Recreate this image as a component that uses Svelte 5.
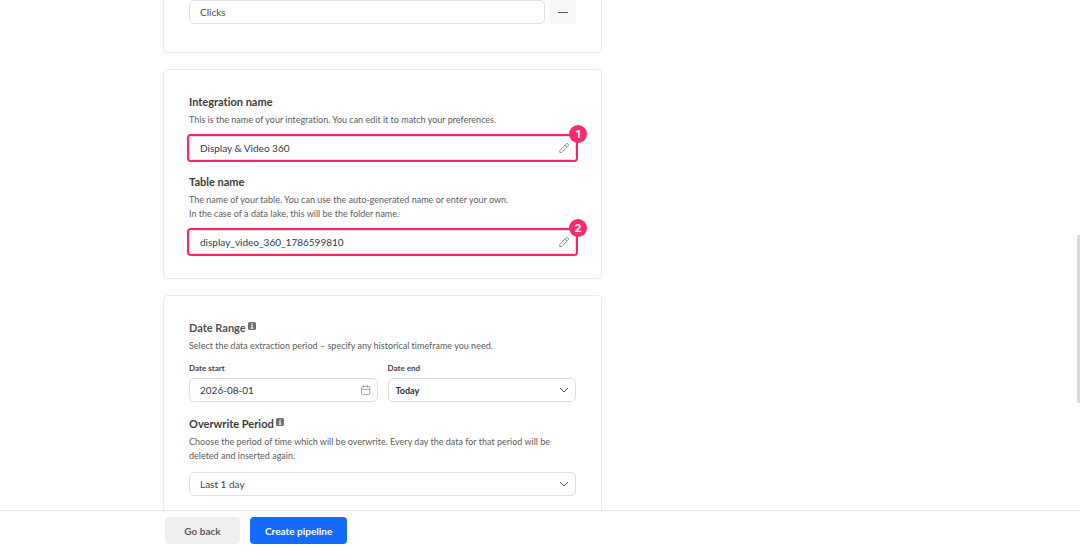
<script>
  let metric = $state("Clicks");
  let integrationName = $state("Display & Video 360");
  let tableName = $state("display_video_360_1786599810");
  let dateStart = $state("2026-08-01");
  let dateEnd = $state("Today");
  let overwrite = $state("Last 1 day");
</script>

{#snippet pencil()}
  <svg class="icon" viewBox="0 0 12 12" aria-hidden="true">
    <path d="M2.2 7.8 8 2a1.4 1.4 0 0 1 2.1 2.1L4.3 9.9c-.6.6-1.5.8-2.5.7-.2-1-.2-2.2.4-2.8zM7.1 3l2 2" />
  </svg>
{/snippet}

{#snippet chevron()}
  <svg class="icon chevron" viewBox="0 0 12 12" aria-hidden="true">
    <path d="m2 4 4 4 4-4" />
  </svg>
{/snippet}

{#snippet info()}
  <svg class="info" viewBox="0 0 8 8" aria-hidden="true">
    <rect width="8" height="8" rx="1.5" fill="#707070" />
    <path d="M3.5 1.2h1.2v1.2H3.5zM3 3.2h1.7v2.6h.7v.9H2.8v-.9h.7V4.1H3z" />
  </svg>
{/snippet}

<div class="page">
  <main class="content">
    <section class="card card-first">
      <div class="metric-row">
        <input type="text" aria-label="Metric" bind:value={metric} />
        <button type="button" class="remove" aria-label="Remove metric"></button>
      </div>
    </section>

    <section class="card">
      <div class="group">
        <label class="title" for="integration-name">Integration name</label>
        <p>This is the name of your integration. You can edit it to match your preferences.</p>
        <div class="field marked">
          <input id="integration-name" class="dark" type="text" bind:value={integrationName} />
          {@render pencil()}
          <span class="badge">1</span>
        </div>
      </div>

      <div class="group">
        <label class="title" for="table-name">Table name</label>
        <p>
          The name of your table. You can use the auto-generated name or enter your own.<br />
          In the case of a data lake, this will be the folder name.
        </p>
        <div class="field marked">
          <input id="table-name" class="dark" type="text" bind:value={tableName} />
          {@render pencil()}
          <span class="badge">2</span>
        </div>
      </div>
    </section>

    <section class="card">
      <div class="group">
        <h2 class="title soft">Date Range {@render info()}</h2>
        <p>Select the data extraction period – specify any historical timeframe you need.</p>
        <div class="dates">
          <div class="date">
            <label for="date-start">Date start</label>
            <div class="field">
              <input id="date-start" class="dark" type="text" bind:value={dateStart} />
              <svg class="icon calendar" viewBox="0 0 12 12" aria-hidden="true">
                <rect x="1.5" y="2.4" width="8.2" height="8.2" rx="1" />
                <path d="M1.5 5.4h8.2M3.6 1v2.6M7.6 1v2.6" />
              </svg>
            </div>
          </div>
          <div class="date">
            <label for="date-end">Date end</label>
            <div class="field">
              <select id="date-end" class="compact" bind:value={dateEnd}>
                <option>Today</option>
              </select>
              {@render chevron()}
            </div>
          </div>
        </div>
      </div>

      <div class="group">
        <label class="title" for="overwrite">Overwrite Period {@render info()}</label>
        <p>
          Choose the period of time which will be overwrite. Every day the data for that period will be
          deleted and inserted again.
        </p>
        <div class="field">
          <select id="overwrite" bind:value={overwrite}>
            <option>Last 1 day</option>
          </select>
          {@render chevron()}
        </div>
      </div>
    </section>

    <div class="scroll-thumb"></div>
  </main>

  <footer>
    <button type="button" class="back">Go back</button>
    <button type="button" class="create">Create pipeline</button>
  </footer>
</div>

<style>
  :global(body) {
    background: #fff;
    color: #444;
    font-family: Lato, sans-serif;
    font-variant-ligatures: none;
  }

  .page {
    display: flex;
    flex-direction: column;
    height: 100vh;
  }

  .content {
    position: relative;
    flex: 1;
    min-height: 0;
    overflow: hidden;
    padding: 0 24px 0 163px;
  }

  .card {
    box-sizing: border-box;
    max-width: 439px;
    margin-bottom: 16px;
    padding: 24px 25px;
    border: 1px solid #ebebeb;
    border-radius: 4px;
  }

  .card-first {
    padding-top: 0;
    padding-bottom: 28px;
    border-top: 0;
    border-radius: 0 0 4px 4px;
  }

  .metric-row {
    display: flex;
    gap: 5px;
  }

  .remove {
    display: flex;
    flex: 0 0 26px;
    align-items: center;
    justify-content: center;
    padding: 0;
    border: 0;
    border-radius: 4px;
    background: #f6f6f6;
  }

  .remove::before {
    content: "";
    width: 10px;
    height: 1px;
    background: #555;
  }

  .group + .group {
    margin-top: 14px;
  }

  .title {
    display: block;
    margin: 0 0 3px;
    color: #3c3c3c;
    font-size: 11px;
    font-weight: 700;
    line-height: 16px;
  }

  .soft {
    color: #505050;
  }

  p {
    margin: 0 0 9px;
    color: #5c5c5c;
    font-size: 9px;
    line-height: 14px;
  }

  .info {
    width: 8px;
    height: 8px;
    vertical-align: 2px;
  }

  .info path {
    fill: #fff;
  }

  .field {
    position: relative;
  }

  input,
  select {
    box-sizing: border-box;
    display: block;
    width: 100%;
    height: 24px;
    padding: 0 24px 0 10px;
    border: 1px solid #dedede;
    border-radius: 5px;
    outline: 0;
    background: #fff;
    color: #505050;
    font-family: inherit;
    font-size: 10px;
    appearance: none;
  }

  select {
    color: #444;
  }

  .dark {
    color: #2e3a50;
  }

  .compact {
    padding-left: 7px;
    color: #2a3140;
    font-size: 9px;
    font-weight: 700;
  }

  .icon {
    position: absolute;
    top: 6px;
    right: 6px;
    width: 12px;
    height: 12px;
    fill: none;
    stroke: #7a7a82;
    stroke-width: 0.8;
    pointer-events: none;
  }

  .chevron {
    stroke: #444c5c;
    stroke-width: 1;
  }

  .calendar {
    stroke: #909090;
  }

  .marked::after {
    content: "";
    position: absolute;
    inset: -2px;
    border: 2px solid #f72765;
    border-radius: 4px;
    pointer-events: none;
  }

  .badge {
    position: absolute;
    z-index: 1;
    top: -11px;
    right: -11px;
    width: 18px;
    border-radius: 50%;
    background: #fb2b69;
    color: #fff;
    font-family: Inter, sans-serif;
    font-size: 11px;
    font-weight: 700;
    line-height: 18px;
    text-align: center;
  }

  .dates {
    display: grid;
    grid-template-columns: 1fr 1fr;
    gap: 10px;
  }

  .date label {
    display: block;
    margin-bottom: 3px;
    font-size: 8px;
    font-weight: 700;
    line-height: 13px;
  }

  .scroll-thumb {
    position: absolute;
    top: 46%;
    right: 0;
    width: 3px;
    height: 33%;
    border-radius: 2px 0 0 2px;
    background: #d8d8d8;
  }

  footer {
    display: flex;
    gap: 10px;
    padding: 6px 24px 6px 165px;
    border-top: 1px solid #e8e8e8;
    background: #fff;
  }

  footer button {
    height: 27px;
    padding: 0 15px;
    border: 0;
    border-radius: 4px;
    font-family: inherit;
    font-size: 10px;
    font-weight: 700;
  }

  .back {
    min-width: 75px;
    background: #efefef;
    color: #5a5a5a;
  }

  .create {
    background: #146aff;
    color: #fff;
  }
</style>
